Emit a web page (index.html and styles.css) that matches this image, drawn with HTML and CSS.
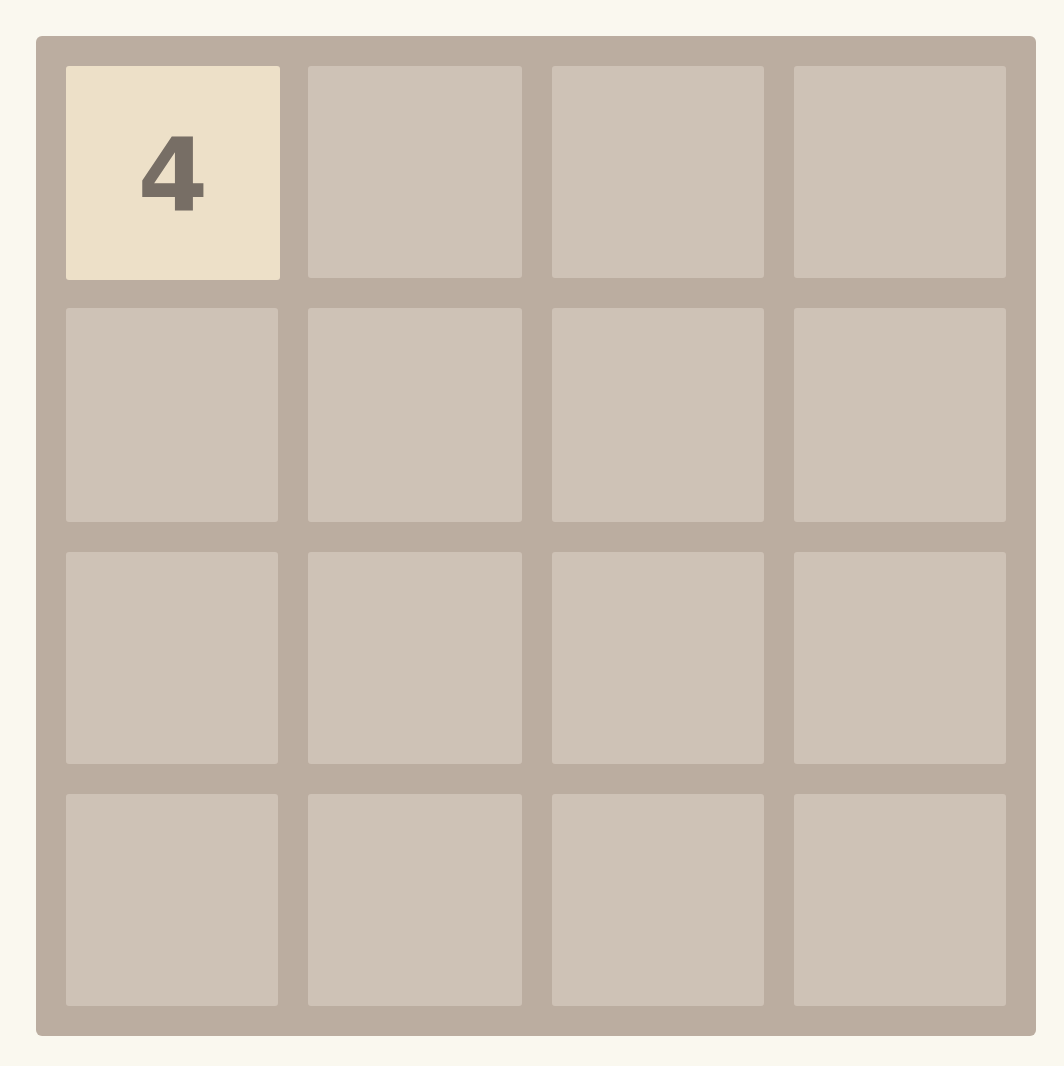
FILE: index.html
```html
<!DOCTYPE html>
<html lang="en">
<head>
<meta charset="utf-8">
<title>2048</title>
<link rel="stylesheet" href="styles.css">
</head>
<body>
<div class="board">
  <div class="cell tile tile-4">4</div>
  <div class="cell"></div>
  <div class="cell"></div>
  <div class="cell"></div>
  <div class="cell"></div>
  <div class="cell"></div>
  <div class="cell"></div>
  <div class="cell"></div>
  <div class="cell"></div>
  <div class="cell"></div>
  <div class="cell"></div>
  <div class="cell"></div>
  <div class="cell"></div>
  <div class="cell"></div>
  <div class="cell"></div>
  <div class="cell"></div>
</div>
</body>
</html>
```

FILE: styles.css
```css
html, body {
  margin: 0;
  background: #faf8ef;
}

body {
  padding: 36px;
  font-family: "DejaVu Sans", "Liberation Sans", Arial, sans-serif;
}

.board {
  width: 1000px;
  height: 1000px;
  box-sizing: border-box;
  padding: 30px;
  background: #bbada0;
  border-radius: 6px;
  display: grid;
  grid-template-columns: 212px 214px 212px 212px;
  grid-template-rows: 212px 214px 212px 212px;
  gap: 30px;
}

.cell {
  background: #cec2b6;
  border-radius: 3px;
}

.tile {
  margin: 0 -2px -2px 0;
  padding-top: 7px;
  box-sizing: border-box;
  display: flex;
  align-items: center;
  justify-content: center;
  font-weight: bold;
  font-size: 101px;
  line-height: 1;
  color: #776e65;
}

.tile-4 {
  background: #ede0c8;
}
```
